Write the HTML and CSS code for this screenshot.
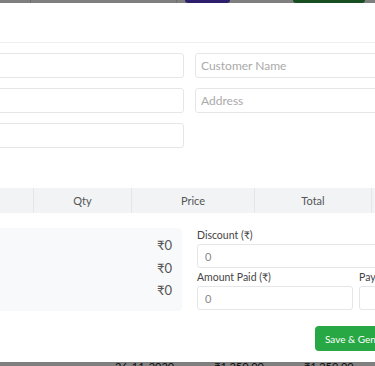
FILE: index.html
```html
<!DOCTYPE html>
<html lang="en">
<head>
  <meta charset="UTF-8">
  <title>Billing</title>
  <link rel="stylesheet" href="styles.css">
</head>
<body>

  <div class="page">
    <div class="toolbar">
      <span class="tb-title">Invoices</span>
      <button class="tb-btn purple">Export</button>
      <button class="tb-btn green">New Invoice</button>
    </div>
    <div class="list-row">
      <span>26-11-2020</span>
      <span>₹1,250.00</span>
      <span>₹1,250.00</span>
    </div>
  </div>

  <div class="overlay"></div>

  <div class="modal">
    <div class="modal-header">
      <h3>Create Invoice</h3>
      <span class="close">&times;</span>
    </div>

    <div class="modal-body">
      <div class="form-grid">
        <input type="text" placeholder="Invoice Number" />
        <input type="text" placeholder="Customer Name" />
        <input type="text" placeholder="Invoice Date" />
        <input type="text" placeholder="Address" />
        <input type="text" placeholder="Phone Number" />
        <div></div>
      </div>

      <table class="items">
        <thead>
          <tr>
            <th class="col-item">Item</th>
            <th class="col-qty">Qty</th>
            <th class="col-price">Price</th>
            <th class="col-total">Total</th>
            <th class="col-act">Action</th>
          </tr>
        </thead>
        <tbody id="itemTable"></tbody>
      </table>

      <div class="summary-grid">
        <div class="summary">
          <div class="sum-row"><span>Subtotal</span><span>₹0</span></div>
          <div class="sum-row"><span>Grand Total</span><span>₹0</span></div>
          <div class="sum-row"><span>Balance</span><span>₹0</span></div>
        </div>

        <div class="payment">
          <label>Discount (₹)</label>
          <input type="number" value="0" />
          <div class="pay-grid">
            <div>
              <label>Amount Paid (₹)</label>
              <input type="number" value="0" />
            </div>
            <div>
              <label>Payment Mode</label>
              <input type="text" value="" />
            </div>
          </div>
        </div>
      </div>

      <div class="actions">
        <button class="btn save-btn">Save &amp; Generate</button>
        <button class="btn cancel-btn">Cancel</button>
      </div>
    </div>
  </div>

</body>
</html>
```

FILE: styles.css
```css
body {
  margin: 0;
  font-family: Lato, "Noto Sans", sans-serif;
  background: #fff;
  overflow: hidden;
}

/* page behind the modal */
.page {
  margin-top: -30px;
}

.toolbar {
  display: flex;
  align-items: flex-end;
  height: 33px;
  border-left: 1px solid #ddd;
  margin-left: 30px;
}

.tb-title {
  width: 145px;
  border-right: 1px solid #ddd;
  height: 100%;
}

.tb-btn {
  border: none;
  height: 33px;
  color: white;
  font-size: 12px;
  border-radius: 0 0 3px 3px;
}

.purple {
  background: #5a3fd6;
  width: 45px;
  margin-left: 8px;
}

.green {
  background: #2f9e44;
  width: 72px;
  margin-left: 63px;
}

.list-row {
  display: flex;
  gap: 40px;
  margin-top: 357px;
  padding-left: 115px;
  font-size: 11px;
  color: #222;
}

.overlay {
  position: fixed;
  inset: 0;
  background: rgba(0, 0, 0, 0.5);
}

/* modal */
.modal {
  position: fixed;
  top: 3px;
  left: -190px;
  width: 759px;
  height: 359px;
  background: #fff;
}

.modal-header {
  height: 39px;
  border-bottom: 1px solid #eceef0;
  display: flex;
  align-items: center;
  justify-content: space-between;
  padding: 0 16px;
}

.modal-header h3 {
  margin: 0;
  font-size: 15px;
}

.modal-body {
  padding: 10px 16px;
}

.form-grid {
  display: grid;
  grid-template-columns: 1fr 1fr;
  column-gap: 11px;
  row-gap: 10px;
}

input {
  box-sizing: border-box;
  width: 100%;
  height: 25px;
  border: 1px solid #e4e6e8;
  border-radius: 3px;
  padding: 0 5px;
  font-family: inherit;
  font-size: 12px;
  color: #888;
}

input::placeholder {
  color: #aaa;
}

.items {
  width: 100%;
  margin-top: 40px;
  border-collapse: collapse;
}

.items th {
  height: 25px;
  padding: 0;
  background: #f1f3f5;
  border-right: 1px solid #e4e6e9;
  font-size: 11px;
  font-weight: normal;
  color: #555;
}

.col-item { width: 207px; }
.col-qty { width: 97px; }
.col-price { width: 122px; }
.col-total { width: 116px; }

.summary-grid {
  display: grid;
  grid-template-columns: 356px 1fr;
  column-gap: 15px;
  margin-top: 15px;
}

.summary {
  background: #f8f9fa;
  border-radius: 4px;
  height: 83px;
  padding: 6px 10px;
  box-sizing: border-box;
}

.sum-row {
  display: flex;
  justify-content: space-between;
  font-size: 13px;
  line-height: 22.5px;
  color: #555;
}

.payment label {
  display: block;
  font-size: 10.5px;
  color: #444;
  height: 16px;
  line-height: 14px;
}

.payment input {
  height: 24px;
  margin-bottom: 2px;
  padding: 0 7px;
  font-size: 11px;
}

.pay-grid {
  display: grid;
  grid-template-columns: 156px 1fr;
  column-gap: 6px;
}

.actions {
  display: flex;
  justify-content: flex-end;
  gap: 8px;
  margin-top: 14px;
  padding-right: 87px;
}

.btn {
  height: 25px;
  padding: 0 10px;
  border: none;
  border-radius: 4px;
  font-family: inherit;
  font-size: 10px;
  color: white;
}

.save-btn {
  background: #28a745;
}

.cancel-btn {
  background: #6c757d;
}
```
